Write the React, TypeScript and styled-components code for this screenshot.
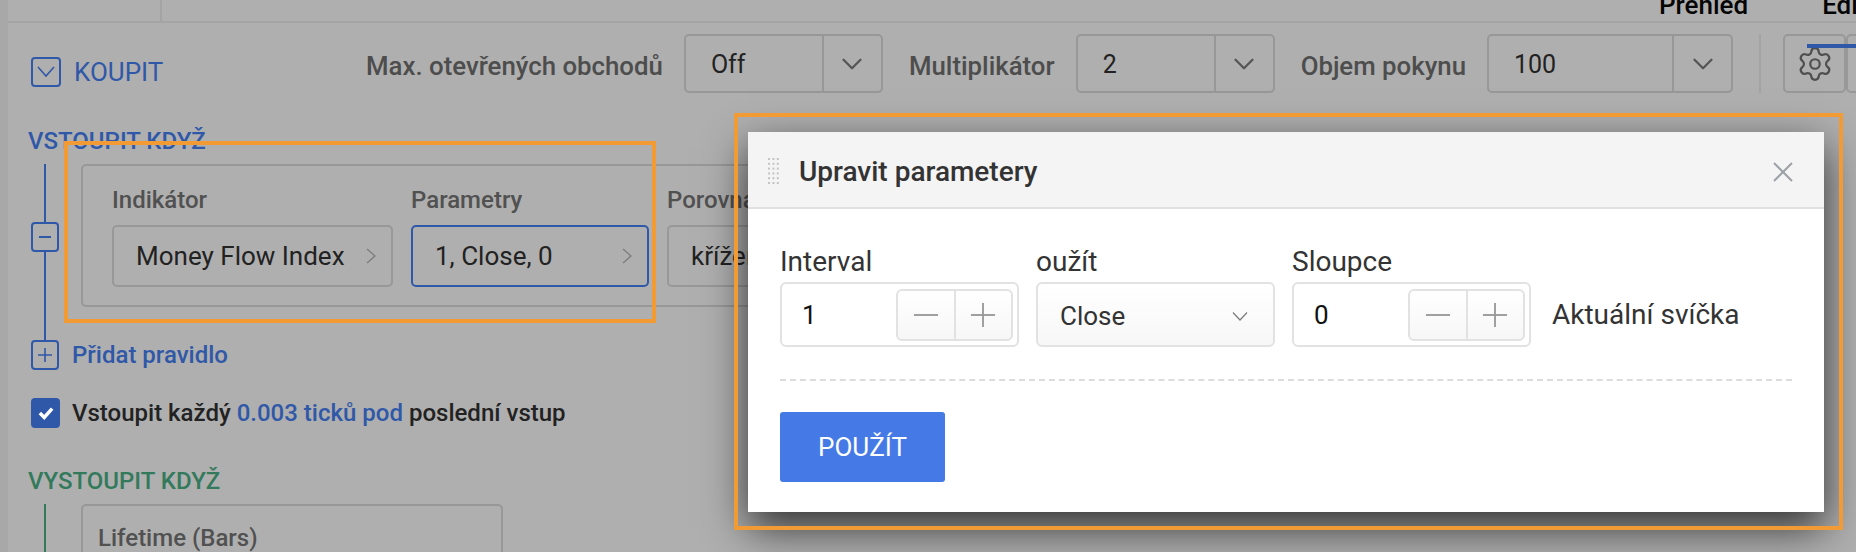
import React from "react";
import { ChevronDown, Settings } from "lucide-react";
import styled, { createGlobalStyle } from "styled-components";

const BLUE = "#3058a8";
const GREEN = "#337a5c";
const LINE = "#989898";

const GlobalStyle = createGlobalStyle`
    html, body {
        margin: 0;
        height: 100%;
        overflow: hidden;
        background: #afafaf;
    }
    * {
        box-sizing: border-box;
    }
`;

const Page = styled.div`
    position: relative;
    width: 1856px;
    height: 552px;
    overflow: hidden;
    background: #afafaf;
    border-left: 8px solid #a8a8a8;
    font-family: Roboto, "Liberation Sans", sans-serif;
    color: #222;
`;

const TopBar = styled.div`
    display: flex;
    height: 23px;
    border-bottom: 2px solid #a4a4a4;
`;

const TopCell = styled.div`
    flex: none;
    width: 154px;
    height: 23px;
    border-right: 2px solid #a4a4a4;
`;

const Tabs = styled.div`
    display: flex;
    flex: none;
    gap: 74px;
    margin-left: 1497px;
    white-space: nowrap;
`;

const Tab = styled.div`
    margin-top: -11px;
    font-size: 26px;
    line-height: 32px;
    font-weight: 500;
    color: #050505;
`;

const ActiveBar = styled.div`
    position: absolute;
    top: 44px;
    left: 1799px;
    width: 60px;
    height: 4px;
    background: ${BLUE};
`;

const Toolbar = styled.div`
    display: flex;
    align-items: flex-start;
    margin: 11px 0 0 23px;
    white-space: nowrap;
`;

const BuyToggle = styled.div`
    display: flex;
    flex: none;
    align-items: center;
    gap: 13px;
    width: 335px;
    height: 31px;
    margin-top: 22px;
    color: ${BLUE};
    font-size: 26px;
`;

const RailBox = styled.div`
    display: flex;
    align-items: center;
    justify-content: center;
    flex: none;
    width: ${(p: { $w?: number }) => p.$w ?? 28}px;
    height: 30px;
    border: 2px solid ${BLUE};
    border-radius: 4px;
    background: #afafaf;
`;

const ToolLabel = styled.div`
    flex: none;
    margin: 17px 21px 0 0;
    font-size: 25.8px;
    line-height: 30px;
    font-weight: 500;
    color: #4d4d4d;
`;

const Dropdown = styled.div<{ $w: number }>`
    display: flex;
    flex: none;
    width: ${(p) => p.$w}px;
    height: 59px;
    margin-right: 26px;
    border: 2px solid ${LINE};
    border-radius: 5px;
    font-size: 25px;
    line-height: 57px;
`;

const DropdownValue = styled.div`
    flex: 1;
    padding-left: 25px;
`;

const DropdownCaret = styled.div`
    display: flex;
    align-items: center;
    justify-content: center;
    width: 59px;
    border-left: 2px solid ${LINE};
    color: #555;
`;

const VSplit = styled.div`
    flex: none;
    width: 2px;
    height: 59px;
    margin-right: 22px;
    background: #a4a4a4;
`;

const IconButton = styled.div`
    display: flex;
    flex: none;
    align-items: center;
    justify-content: center;
    width: 63px;
    height: 59px;
    border: 2px solid ${LINE};
    border-radius: 5px;
    color: #4f4f4f;
`;

const Heading = styled.div<{ $color: string; $gap: number }>`
    margin: ${(p) => p.$gap}px 0 0 20px;
    font-size: 24px;
    line-height: 26px;
    font-weight: 500;
    color: ${(p) => p.$color};
`;

const RuleRow = styled.div`
    display: flex;
    margin: 10px 0 0 23px;
`;

const Rail = styled.div`
    display: flex;
    flex: none;
    flex-direction: column;
    align-items: center;
    width: 28px;
    height: 176px;
    margin-right: 22px;
`;

const RailLine = styled.div<{ $color?: string; $h?: number }>`
    flex: ${(p) => (p.$h ? "none" : 1)};
    width: 2px;
    height: ${(p) => (p.$h ? `${p.$h}px` : "auto")};
    background: ${(p) => p.$color ?? BLUE};
`;

const RulePanel = styled.div<{ $w: number }>`
    display: flex;
    gap: 18px;
    flex: none;
    width: ${(p) => p.$w}px;
    height: 143px;
    padding: 18px 0 0 29px;
    border: 2px solid ${LINE};
    border-radius: 5px;
`;

const Cell = styled.div<{ $w: number }>`
    flex: none;
    width: ${(p) => p.$w}px;
`;

const CellLabel = styled.div`
    height: 41px;
    font-size: 24px;
    line-height: 32px;
    font-weight: 500;
    color: #515151;
    white-space: nowrap;
`;

const CellInput = styled.div<{ $active?: boolean }>`
    display: flex;
    align-items: center;
    justify-content: space-between;
    height: 62px;
    padding: 0 12px 0 22px;
    border: 2px solid ${(p) => (p.$active ? BLUE : LINE)};
    border-radius: 5px;
    font-size: 26px;
    white-space: nowrap;
`;

const AddRow = styled.div`
    display: flex;
    align-items: center;
    gap: 13px;
    margin: 0 0 0 23px;
    color: ${BLUE};
    font-size: 24px;
    font-weight: 500;
`;

const CheckRow = styled.div`
    display: flex;
    align-items: center;
    gap: 12px;
    margin: 28px 0 0 23px;
    font-size: 24px;
    font-weight: 500;
    white-space: nowrap;
`;

const CheckBox = styled.div`
    display: flex;
    align-items: center;
    justify-content: center;
    width: 29px;
    height: 30px;
    border-radius: 4px;
    background: ${BLUE};
`;

const Accent = styled.span`
    color: ${BLUE};
`;

const ExitBlock = styled.div`
    display: flex;
    margin: 10px 0 0 23px;
`;

const ExitRail = styled.div`
    display: flex;
    flex: none;
    flex-direction: column;
    align-items: center;
    width: 28px;
    height: 60px;
    margin-right: 22px;
`;

const ExitPanel = styled.div`
    flex: none;
    width: 422px;
    height: 120px;
    padding: 16px 0 0 15px;
    border: 2px solid ${LINE};
    border-radius: 5px;
    font-size: 24px;
    line-height: 32px;
    font-weight: 500;
    color: #515151;
`;

const Highlight = styled.div<{ $x: number; $y: number; $w: number; $h: number }>`
    position: absolute;
    left: ${(p) => p.$x}px;
    top: ${(p) => p.$y}px;
    width: ${(p) => p.$w}px;
    height: ${(p) => p.$h}px;
    border: 4px solid #f29a33;
    pointer-events: none;
`;

const Modal = styled.div`
    position: absolute;
    left: 740px;
    top: 132px;
    width: 1076px;
    height: 380px;
    background: #fff;
    box-shadow: 0 16px 40px rgba(0, 0, 0, 0.72);
`;

const ModalHeader = styled.div`
    display: flex;
    align-items: center;
    height: 77px;
    padding: 4px 31px 0 20px;
    background: #f4f4f4;
    border-bottom: 2px solid #e0e0e0;
`;

const ModalTitle = styled.div`
    flex: 1;
    margin-left: 20px;
    font-size: 28px;
    font-weight: 500;
    color: #333;
`;

const ModalBody = styled.div`
    padding: 38px 32px 0;
`;

const FieldRow = styled.div`
    display: flex;
    align-items: flex-end;
    gap: 17px;
`;

const Field = styled.div`
    flex: none;
    width: 239px;
`;

const FieldLabel = styled.div`
    height: 35px;
    font-size: 28px;
    line-height: 30px;
    color: #333;
`;

const FieldBox = styled.div`
    display: flex;
    align-items: center;
    justify-content: space-between;
    height: 65px;
    padding: 0 4px 0 20px;
    border: 2px solid #e2e2e2;
    border-radius: 6px;
    font-size: 26px;
    color: #111;
`;

const SelectBox = styled(FieldBox)`
    padding: 2px 25px 0 22px;
    background: linear-gradient(#fff, #f7f7f7);
    color: #333;
`;

const Stepper = styled.div`
    display: flex;
    width: 117px;
    height: 52px;
    border: 2px solid #e2e2e2;
    border-radius: 6px;
    background: linear-gradient(#fff, #f7f7f7);
`;

const StepButton = styled.div`
    display: flex;
    flex: 1;
    align-items: center;
    justify-content: center;
    & + & {
        border-left: 2px solid #e2e2e2;
    }
`;

const Note = styled.div`
    height: 65px;
    margin-left: 4px;
    font-size: 28px;
    line-height: 66px;
    color: #333;
    white-space: nowrap;
`;

const Divider = styled.div`
    margin-top: 32px;
    border-top: 2px dashed #dcdcdc;
`;

const ApplyButton = styled.div`
    display: flex;
    align-items: center;
    justify-content: center;
    width: 165px;
    height: 70px;
    margin-top: 31px;
    border-radius: 3px;
    background: #457ae6;
    color: #fff;
    font-size: 26px;
`;

const Chevron = ({ dir }: { dir: "right" | "down" }) => (
    <svg width="16" height="16" viewBox="0 0 16 16" fill="none" stroke="#7a7a7a" strokeWidth="1.2">
        {dir === "right" ? <path d="M4 1 12 8 4 15" /> : <path d="M1 4.5 8 12 15 4.5" />}
    </svg>
);

const Sign = ({ plus, size = 26 }: { plus?: boolean; size?: number }) => (
    <svg width={size} height={size} viewBox="0 0 28 28" stroke="#999" strokeWidth="2">
        <path d="M1 14H27" />
        {plus && <path d="M14 1V27" />}
    </svg>
);

const DragDots = () => (
    <svg width="11" height="27" viewBox="0 0 11 27" fill="#c4c4c4">
        {[0, 1, 2, 3, 4, 5].map((r) =>
            [0, 1, 2].map((c) => <rect key={`${r}-${c}`} x={c * 4.4} y={r * 4.8} width="2" height="2" />),
        )}
    </svg>
);

const StepField = ({ value }: { value: string }) => (
    <FieldBox>
        {value}
        <Stepper>
            <StepButton>
                <Sign />
            </StepButton>
            <StepButton>
                <Sign plus />
            </StepButton>
        </Stepper>
    </FieldBox>
);

export default function App() {
    return (
        <Page>
            <GlobalStyle />
            <TopBar>
                <TopCell />
                <Tabs>
                    <Tab>Přehled</Tab>
                    <Tab>Editor</Tab>
                </Tabs>
            </TopBar>

            <Toolbar>
                <BuyToggle>
                    <RailBox $w={30}>
                        <svg width="20" height="14" viewBox="0 0 20 14" fill="none" stroke={BLUE} strokeWidth="1.6">
                            <path d="M2 2 10 11 18 2" />
                        </svg>
                    </RailBox>
                    KOUPIT
                </BuyToggle>
                <ToolLabel>Max. otevřených obchodů</ToolLabel>
                <Dropdown $w={199}>
                    <DropdownValue>Off</DropdownValue>
                    <DropdownCaret>
                        <ChevronDown size={34} strokeWidth={1.6} />
                    </DropdownCaret>
                </Dropdown>
                <ToolLabel>Multiplikátor</ToolLabel>
                <Dropdown $w={199}>
                    <DropdownValue>2</DropdownValue>
                    <DropdownCaret>
                        <ChevronDown size={34} strokeWidth={1.6} />
                    </DropdownCaret>
                </Dropdown>
                <ToolLabel>Objem pokynu</ToolLabel>
                <Dropdown $w={246}>
                    <DropdownValue>100</DropdownValue>
                    <DropdownCaret>
                        <ChevronDown size={34} strokeWidth={1.6} />
                    </DropdownCaret>
                </Dropdown>
                <VSplit />
                <IconButton>
                    <Settings size={38} strokeWidth={1.4} />
                </IconButton>
                <IconButton />
            </Toolbar>
            <ActiveBar />

            <Heading $color={BLUE} $gap={35}>
                VSTOUPIT KDYŽ
            </Heading>
            <RuleRow>
                <Rail>
                    <RailLine $h={58} />
                    <RailBox>
                        <svg width="14" height="4" viewBox="0 0 14 4" stroke={BLUE} strokeWidth="2">
                            <path d="M1 2H13" />
                        </svg>
                    </RailBox>
                    <RailLine />
                </Rail>
                <RulePanel $w={760}>
                    <Cell $w={281}>
                        <CellLabel>Indikátor</CellLabel>
                        <CellInput>
                            Money Flow Index
                            <Chevron dir="right" />
                        </CellInput>
                    </Cell>
                    <Cell $w={238}>
                        <CellLabel>Parametry</CellLabel>
                        <CellInput $active>
                            1, Close, 0
                            <Chevron dir="right" />
                        </CellInput>
                    </Cell>
                    <Cell $w={200}>
                        <CellLabel>Porovnání</CellLabel>
                        <CellInput>křížení</CellInput>
                    </Cell>
                </RulePanel>
            </RuleRow>
            <AddRow>
                <RailBox>
                    <svg width="16" height="16" viewBox="0 0 16 16" stroke={BLUE} strokeWidth="1.6">
                        <path d="M1 8H15M8 1V15" />
                    </svg>
                </RailBox>
                Přidat pravidlo
            </AddRow>
            <CheckRow>
                <CheckBox>
                    <svg width="16" height="14" viewBox="0 0 18 16" fill="none" stroke="#fff" strokeWidth="4">
                        <path d="M2 8 7 13 16 3" />
                    </svg>
                </CheckBox>
                <span>
                    Vstoupit každý <Accent>0.003 ticků pod</Accent> poslední vstup
                </span>
            </CheckRow>

            <Heading $color={GREEN} $gap={40}>
                VYSTOUPIT KDYŽ
            </Heading>
            <ExitBlock>
                <ExitRail>
                    <RailLine $color={GREEN} />
                </ExitRail>
                <ExitPanel>Lifetime (Bars)</ExitPanel>
            </ExitBlock>

            <Highlight $x={56} $y={141} $w={592} $h={182} />

            <Modal>
                <ModalHeader>
                    <DragDots />
                    <ModalTitle>Upravit parametery</ModalTitle>
                    <svg width="20" height="20" viewBox="0 0 20 20" stroke="#9ca1a5" strokeWidth="2">
                        <path d="M1 1 19 19M19 1 1 19" />
                    </svg>
                </ModalHeader>
                <ModalBody>
                    <FieldRow>
                        <Field>
                            <FieldLabel>Interval</FieldLabel>
                            <StepField value="1" />
                        </Field>
                        <Field>
                            <FieldLabel>oužít</FieldLabel>
                            <SelectBox>
                                Close
                                <Chevron dir="down" />
                            </SelectBox>
                        </Field>
                        <Field>
                            <FieldLabel>Sloupce</FieldLabel>
                            <StepField value="0" />
                        </Field>
                        <Note>Aktuální svíčka</Note>
                    </FieldRow>
                    <Divider />
                    <ApplyButton>POUŽÍT</ApplyButton>
                </ModalBody>
            </Modal>

            <Highlight $x={726} $y={113} $w={1109} $h={417} />
        </Page>
    );
}
